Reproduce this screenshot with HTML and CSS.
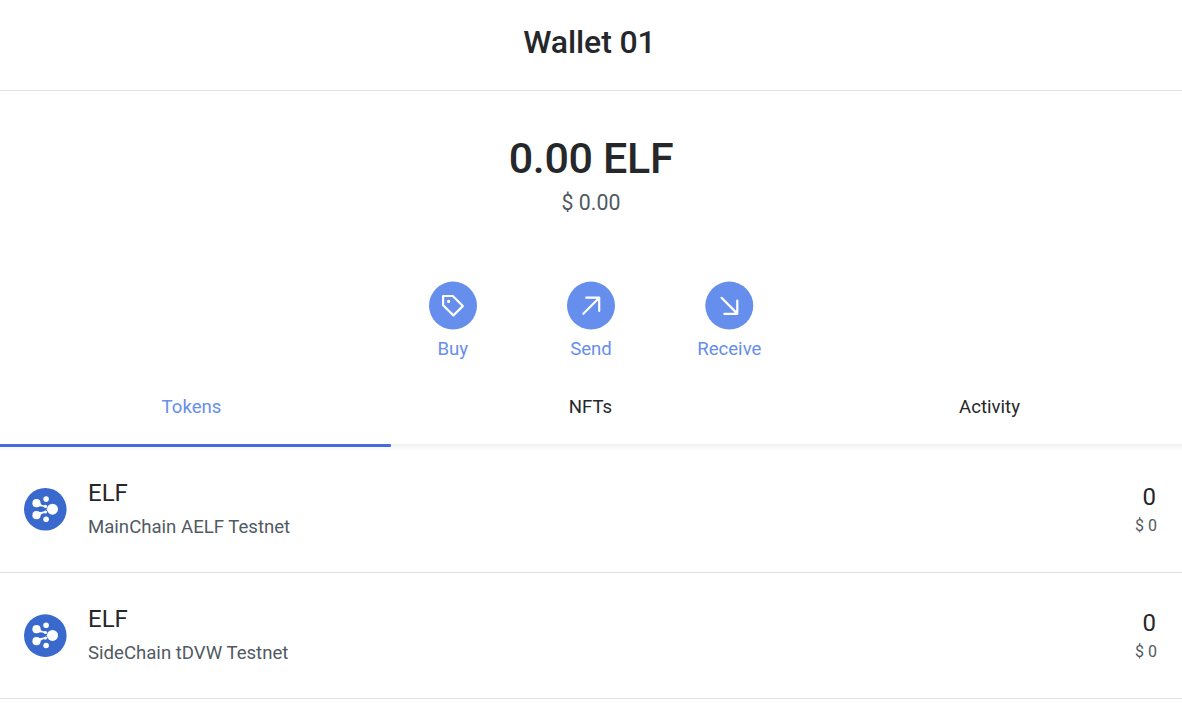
FILE: index.html
```html
<!DOCTYPE html>
<html lang="en">
<head>
<meta charset="utf-8">
<title>Wallet 01</title>
<link rel="stylesheet" href="styles.css">
</head>
<body>
<header class="header"><h1 class="title">Wallet 01</h1></header>
<section class="balance">
  <div class="amount">0.00 ELF</div>
  <div class="fiat">$ 0.00</div>
</section>
<nav class="actions">
  <a class="action"><svg class="action-icon" viewBox="0 0 48 48"><circle cx="24" cy="23.6" r="24"/><path d="M14.1 14h9.7l10 10.1-9.4 9.3-10.3-10.1z"/><circle class="dot" cx="19.6" cy="19.4" r="1.6"/></svg><span>Buy</span></a>
  <a class="action"><svg class="action-icon" viewBox="0 0 48 48"><circle cx="24" cy="23.6" r="24"/><path d="M16.3 31.8L32 15.9M19.2 15.7h13V29"/></svg><span>Send</span></a>
  <a class="action"><svg class="action-icon" viewBox="0 0 48 48"><circle cx="24.3" cy="23.6" r="24"/><path d="M16.5 15.8L32.3 31.6M32.3 18.5v13.3h-13"/></svg><span>Receive</span></a>
</nav>
<nav class="tabs">
  <a class="tab active">Tokens</a>
  <a class="tab">NFTs</a>
  <a class="tab">Activity</a>
</nav>
<div class="tab-track"><div class="tab-bar"></div></div>
<main class="tokens">
  <article class="token">
    <svg class="logo" viewBox="0 0 43 43"><circle class="disc" cx="21.3" cy="21.3" r="21.3"/><path d="M14 13Q17 17.6 21.5 17.6V19.4Q17 17.8 13 18.4zM14 29.5Q17 24.9 21.5 24.9V23.1Q17 24.7 13 24.1z"/><circle cx="12.5" cy="15.2" r="4.1"/><circle cx="12.5" cy="27.2" r="4.1"/><circle cx="28.5" cy="21.2" r="5.5"/><circle cx="22.1" cy="11.1" r="2.8"/><circle cx="22.1" cy="31.3" r="2.8"/><circle cx="21.5" cy="18.4" r="1.6"/><circle cx="21.5" cy="24" r="1.6"/><circle cx="23.2" cy="21.2" r=".7"/></svg>
    <div class="info"><div class="symbol">ELF</div><div class="chain">MainChain AELF Testnet</div></div>
    <div class="value"><div class="quantity">0</div><div class="price">$ 0</div></div>
  </article>
  <article class="token">
    <svg class="logo" viewBox="0 0 43 43"><circle class="disc" cx="21.3" cy="21.6" r="21.3"/><path d="M14 13Q17 17.6 21.5 17.6V19.4Q17 17.8 13 18.4zM14 29.5Q17 24.9 21.5 24.9V23.1Q17 24.7 13 24.1z"/><circle cx="12.5" cy="15.2" r="4.1"/><circle cx="12.5" cy="27.2" r="4.1"/><circle cx="28.5" cy="21.4" r="5.5"/><circle cx="22.1" cy="11.3" r="2.8"/><circle cx="22.1" cy="31.5" r="2.8"/><circle cx="21.5" cy="18.5" r="1.6"/><circle cx="21.5" cy="24.1" r="1.6"/><circle cx="23.2" cy="21.4" r=".7"/></svg>
    <div class="info"><div class="symbol">ELF</div><div class="chain">SideChain tDVW Testnet</div></div>
    <div class="value"><div class="quantity">0</div><div class="price">$ 0</div></div>
  </article>
</main>
</body>
</html>
```
FILE: styles.css
```css
* { box-sizing: border-box; }
body { margin: 0; background: #fff; color: #25272a; font-family: Roboto, sans-serif; overflow: hidden; }
.header { height: 91px; padding-top: 22px; border-bottom: 1px solid #dfe1e6; text-align: center; }
.title { margin: 0 3px 0 0; font-size: 32px; line-height: 40px; font-weight: 500; letter-spacing: -.1px; }
.balance { height: 190px; padding-top: 42px; text-align: center; }
.amount { font-size: 43px; line-height: 50px; font-weight: 500; letter-spacing: -.3px; }
.fiat { margin-top: 7px; font-size: 21.3px; line-height: 26px; color: #515a62; }
.actions { display: flex; justify-content: center; gap: 38.3px; height: 101px; }
.action { width: 100px; display: flex; flex-direction: column; align-items: center; color: #668eed; font-size: 18.6px; line-height: 24px; }
.action-icon { width: 48px; height: 48px; margin: .5px 0 7px; flex: none; overflow: visible; }
.action-icon circle { fill: #668eed; }
.action-icon path { fill: none; stroke: #fff; stroke-width: 2.2; stroke-linecap: round; stroke-linejoin: round; }
.action-icon .dot { fill: #fff; }
.tabs { display: flex; gap: 16px; height: 62px; padding-right: 1px; }
.tab { flex: 1; padding-top: 13px; text-align: center; font-size: 18.6px; line-height: 25px; }
.active { color: #668eed; }
.tab-track { height: 7px; background: linear-gradient(#f1f1f1, #fff); }
.tab-bar { width: 391px; height: 3px; background: #416bdf; border-radius: 0 1px 1px 0; }
.token { display: flex; height: 126.3px; padding: 0 25px 0 24px; border-bottom: 1px solid #dfe1e6; }
.tokens { margin-top: -4.5px; }
.logo { width: 43px; height: 43px; margin-top: 41px; flex: none; overflow: visible; }
.disc { fill: #3a69cd; }
.logo circle:not(.disc), .logo path { fill: #fff; }
.info { margin-left: 21px; padding-top: 31.3px; }
.symbol { font-size: 24px; line-height: 30px; }
.chain { margin-top: 7px; font-size: 18.6px; line-height: 24px; color: #515a62; }
.value { margin-left: auto; padding-top: 35.3px; text-align: right; }
.quantity { margin-right: 1px; font-size: 24px; line-height: 30px; }
.price { margin-top: 4px; font-size: 16px; line-height: 20px; color: #515a62; }
```
